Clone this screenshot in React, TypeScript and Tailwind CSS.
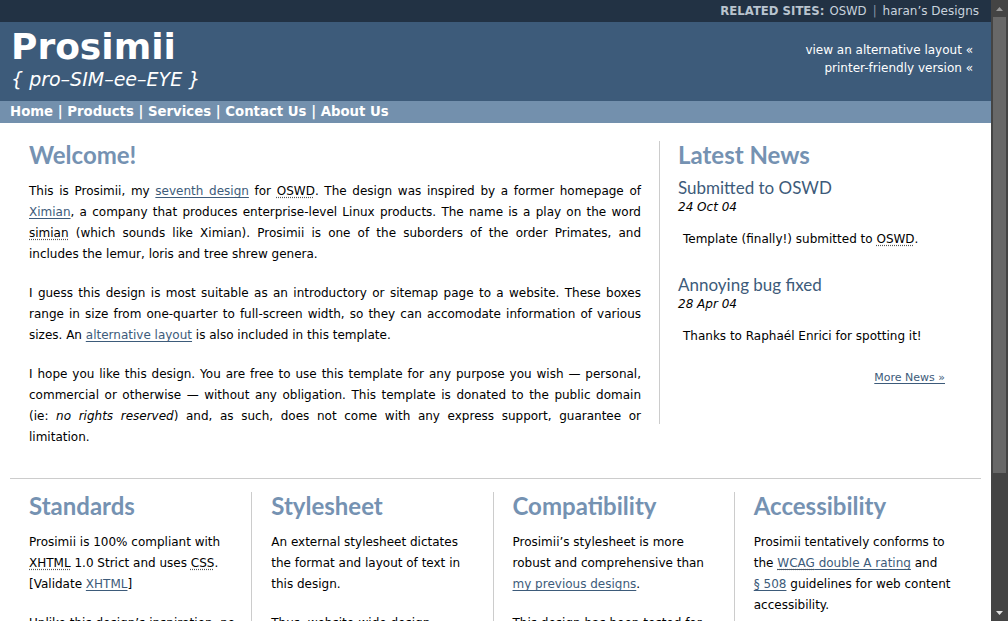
import React from 'react';

const body = "font-['DejaVu_Sans',Verdana,sans-serif]";
const head = "font-['Lato','Open_Sans',sans-serif]";

const A = ({ children }: { children: React.ReactNode }) => (
  <a href="#" className="text-[#3d5b7a] underline decoration-[#3d5b7a] underline-offset-2">
    {children}
  </a>
);

const Abbr = ({ children }: { children: React.ReactNode }) => (
  <span className="underline decoration-dotted decoration-[#555] underline-offset-2">{children}</span>
);

const Scrollbar = () => (
  <div className="w-[17px] shrink-0 bg-[#444] flex flex-col items-center">
    <div className="h-[17px] flex items-center justify-center">
      <svg width="7" height="4" viewBox="0 0 7 4"><path d="M0 4 L3.5 0 L7 4 Z" fill="#9a9a9a" /></svg>
    </div>
    <div className="w-[13px] h-[456px] bg-[#686868]" />
    <div className="flex-1" />
    <div className="h-[17px] flex items-center justify-center">
      <svg width="7" height="4" viewBox="0 0 7 4"><path d="M0 0 L3.5 4 L7 0 Z" fill="#e0e0e0" /></svg>
    </div>
  </div>
);

const news = [
  { title: 'Submitted to OSWD', date: '24 Oct 04', text: <>Template (finally!) submitted to <Abbr>OSWD</Abbr>.</> },
  { title: 'Annoying bug fixed', date: '28 Apr 04', text: <>Thanks to Raphaél Enrici for spotting it!</> },
];

const boxes = [
  {
    title: 'Standards',
    paras: [
      <>Prosimii is 100% compliant with <Abbr>XHTML</Abbr> 1.0 Strict and uses <Abbr>CSS</Abbr>. [Validate <A>XHTML</A>]</>,
      <>Unlike this design’s inspiration, no tables are used for layout.</>,
    ],
  },
  {
    title: 'Stylesheet',
    paras: [
      <>An external stylesheet dictates the format and layout of text in this design.</>,
      <>Thus, website-wide design changes can be made in one place.</>,
    ],
  },
  {
    title: 'Compatibility',
    paras: [
      <>Prosimii’s stylesheet is more robust and comprehensive than <A>my previous designs</A>.</>,
      <>This design has been tested for compatibility with modern browsers.</>,
    ],
  },
  {
    title: 'Accessibility',
    paras: [
      <>Prosimii tentatively conforms to the <A><Abbr>WCAG</Abbr> double A rating</A> and <A>§&nbsp;508</A> guidelines for web content accessibility.</>,
    ],
  },
];

export default function App() {
  return (
    <div className={`flex h-[621px] overflow-hidden bg-white ${body}`}>
      <div className="flex-1 min-w-0 flex flex-col">
        {/* related sites */}
        <div className="h-[22px] shrink-0 bg-[#223244] flex justify-end items-center pr-[12px] text-[11.7px] leading-[22px]">
          <span className="font-bold text-[#b9c4cf]">RELATED SITES:</span>
          <span className="ml-[5px] text-[#c9d3dd]">OSWD</span>
          <span className="mx-[6px] text-[#8797a8]">|</span>
          <span className="text-[#c9d3dd] text-[12px]">haran’s Designs</span>
        </div>

        {/* header */}
        <div className="h-[79px] shrink-0 bg-[#3d5b7a] flex justify-between pl-[11px] pr-[18px]">
          <div className="pt-[7px]">
            <div className="text-[36px] leading-[36px] font-bold text-white">Prosimii</div>
            <div className="mt-[3px] text-[19px] leading-[22px] italic text-white">{'{ pro–SIM–ee–EYE }'}</div>
          </div>
          <div className="pt-[19px] text-right text-[12px] leading-[18px] text-white">
            <div>view an alternative layout «</div>
            <div>printer-friendly version «</div>
          </div>
        </div>

        {/* nav */}
        <div className="h-[22px] shrink-0 bg-[#7390ad] pl-[10px] text-[13.3px] leading-[22px] font-bold text-white">
          Home | Products | Services | Contact Us | About Us
        </div>

        {/* main */}
        <div className="shrink-0 px-[10px] pt-[18px]">
          <div className="flex items-start">
            <div className="w-[649px] pl-[19px] pr-[18px] text-[12px] leading-[21px] text-black text-justify">
              <h1 className={`${head} text-[24px] leading-[28px] font-bold text-[#7592b2]`}>Welcome!</h1>
              <p className="mt-[12px]">
                This is Prosimii, my <A>seventh design</A> for <Abbr>OSWD</Abbr>. The design was inspired by a former homepage of <A>Ximian</A>, a company that produces enterprise-level Linux products. The name is a play on the word <Abbr>simian</Abbr> (which sounds like Ximian). Prosimii is one of the suborders of the order Primates, and includes the lemur, loris and tree shrew genera.
              </p>
              <p className="mt-[18px]">
                I guess this design is most suitable as an introductory or sitemap page to a website. These boxes range in size from one-quarter to full-screen width, so they can accomodate information of various sizes. An <A>alternative layout</A> is also included in this template.
              </p>
              <p className="mt-[18px]">
                I hope you like this design. You are free to use this template for any purpose you wish — personal, commercial or otherwise — without any obligation. This template is donated to the public domain <span className="whitespace-nowrap">(ie: <i>no</i></span> <i>rights reserved</i>) and, as such, does not come with any express support, guarantee or limitation.
              </p>
            </div>
            <div className="w-[322px] border-l border-[#cccccc] pl-[18px] pr-[36px] pb-[36px]">
              <h2 className={`${head} text-[24px] leading-[28px] font-bold text-[#7592b2]`}>Latest News</h2>
              {news.map((n, i) => (
                <div key={n.title} className={i === 0 ? 'mt-[9px]' : 'mt-[25px]'}>
                  <h3 className={`${head} text-[17px] leading-[20px] text-[#3d5b7a]`}>{n.title}</h3>
                  <div className="text-[12px] leading-[18px] italic text-black">{n.date}</div>
                  <p className="mt-[13px] pl-[5px] text-[12px] leading-[21px] text-black">{n.text}</p>
                </div>
              ))}
              <div className="mt-[20px] text-right text-[11px] leading-[21px]">
                <A>More News »</A>
              </div>
            </div>
          </div>

          <div className="mt-[30px] border-t border-[#cccccc]" />

          <div className="w-[965px] grid grid-cols-4 mt-[13px]">
            {boxes.map((b, i) => (
              <div key={b.title} className={`pl-[19px] pr-[16px] text-[12px] leading-[21px] text-black ${i > 0 ? 'border-l border-[#cccccc]' : ''}`}>
                <h2 className={`${head} text-[24px] leading-[28px] font-bold text-[#7592b2]`}>{b.title}</h2>
                {b.paras.map((p, j) => (
                  <p key={j} className={j === 0 ? 'mt-[12px]' : 'mt-[18px]'}>{p}</p>
                ))}
              </div>
            ))}
          </div>
        </div>
      </div>
      <Scrollbar />
    </div>
  );
}
